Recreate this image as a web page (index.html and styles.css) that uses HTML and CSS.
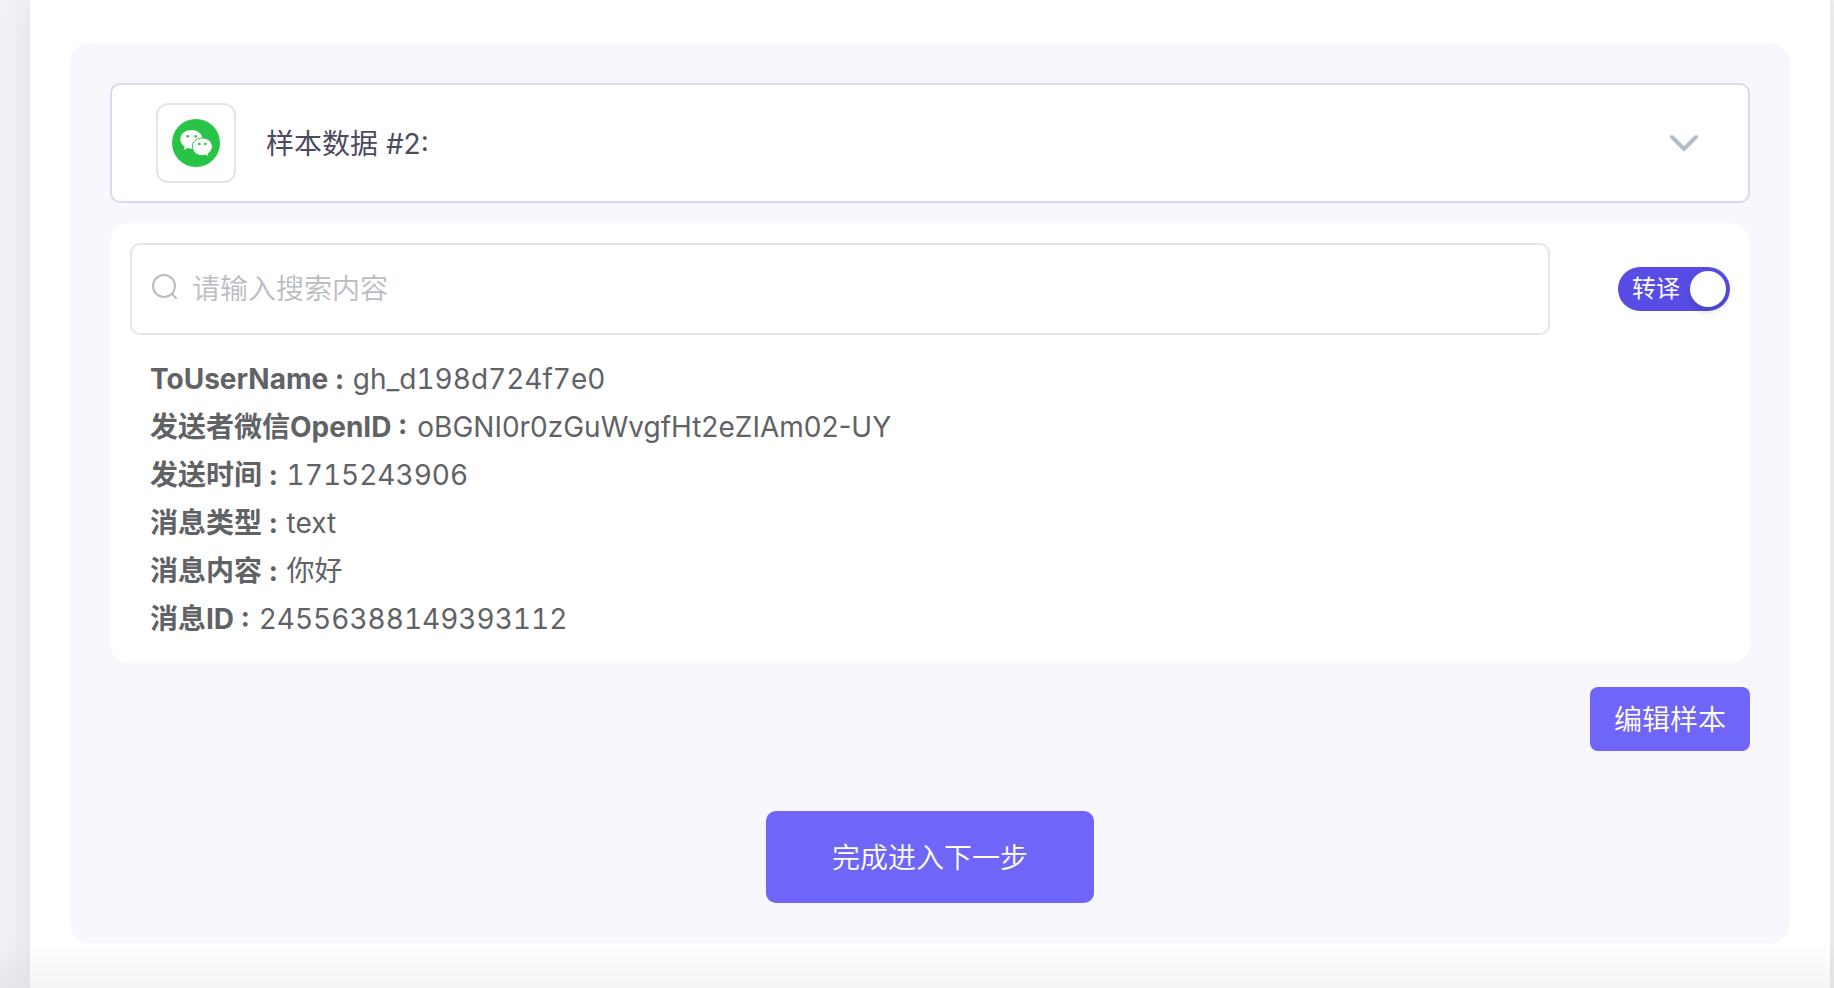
FILE: index.html
```
<!DOCTYPE html>
<html lang="zh-CN">

<head>
    <meta charset="utf-8">
    <meta name="viewport" content="width=device-width, initial-scale=1.0">
    <title>样本数据</title>
    <link rel="stylesheet" href="styles.css">
</head>

<body>
    <main class="page">
        <section class="panel">
            <button class="sample-head" type="button">
                <span class="app-icon">
                    <svg viewBox="0 0 144 144" width="48" height="48" aria-hidden="true">
                        <circle cx="72" cy="72" r="72" fill="#28c445" />
                        <path fill="#fff" d="M58 33c-19 0-33 12-33 28 0 9 5 17 13 22l-3 10 12-6c4 1 7 2 11 2 19 0 34-12 34-28S77 33 58 33z" />
                        <path fill="#fff" stroke="#28c445" stroke-width="3" d="M91 57c-17 0-30 11-30 26s13 27 30 27c4 0 7-1 10-2l9 6-2-10c8-5 13-12 13-21 0-15-13-26-30-26z" />
                        <g fill="#28c445">
                            <circle cx="47" cy="52" r="4" />
                            <circle cx="71" cy="52" r="4" />
                            <circle cx="82" cy="75" r="4" />
                            <circle cx="100" cy="75" r="4" />
                        </g>
                    </svg>
                </span>
                <span class="sample-title">样本数据 #2:</span>
                <svg class="arrow" viewBox="0 0 32 32" width="32" height="32" aria-hidden="true">
                    <path d="M4 10l12 12 12-12" />
                </svg>
            </button>

            <div class="card">
                <div class="toolbar">
                    <label class="search">
                        <svg viewBox="0 0 28 28" width="28" height="28" aria-hidden="true">
                            <circle cx="12" cy="11" r="11" />
                            <path d="M20 19l4 4" />
                        </svg>
                        <input type="text" placeholder="请输入搜索内容" aria-label="搜索">
                    </label>
                    <label class="switch">
                        <input type="checkbox" checked>
                        <span>转译</span>
                    </label>
                </div>
                <ul class="fields">
                    <li><b>ToUserName :</b> gh_d198d724f7e0</li>
                    <li class="open-id"><b>发送者微信OpenID :</b> oBGNI0r0zGuWvgfHt2eZIAm02-UY</li>
                    <li><b>发送时间 :</b> 1715243906</li>
                    <li><b>消息类型 :</b> text</li>
                    <li><b>消息内容 :</b> 你好</li>
                    <li><b>消息ID :</b> 24556388149393112</li>
                </ul>
            </div>

            <button class="btn btn-edit" type="button">编辑样本</button>
            <button class="btn btn-next" type="button">完成进入下一步</button>
        </section>
    </main>
</body>

</html>
```
FILE: styles.css
```
* {
    box-sizing: border-box;
}

body {
    margin: 0;
    background: #f1f2f6;
    font-family: Inter, "Noto Sans CJK SC", sans-serif;
    font-size: 28px;
    color: #606266;
}

button,
input {
    font: inherit;
}

.page {
    min-height: 100vh;
    margin: 0 4px 0 30px;
    padding: 43px 40px 45px;
    background: #fff;
    box-shadow: 0 0 32px rgba(0, 0, 0, 0.08);
}

/* soft shade above the bottom edge */
.page::after {
    content: "";
    position: fixed;
    left: 0;
    right: 0;
    bottom: 0;
    height: 48px;
    background: linear-gradient(rgba(0, 0, 0, 0), rgba(0, 0, 0, 0.04));
    pointer-events: none;
}

.panel {
    display: flex;
    flex-direction: column;
    padding: 40px;
    border-radius: 20px;
    background: #f7f7fd;
}

.sample-head {
    display: flex;
    align-items: center;
    height: 120px;
    padding: 0 48px 0 44px;
    border: 2px solid #dad8f0;
    border-radius: 10px;
    background: #fff;
    color: #4c4960;
    text-align: left;
}

.app-icon {
    display: flex;
    align-items: center;
    justify-content: center;
    width: 80px;
    height: 80px;
    margin-right: 30px;
    border: 2px solid #e6e6e8;
    border-radius: 12px;
}

.sample-title {
    flex: 1;
    padding-bottom: 2px;
}

.arrow {
    fill: none;
    stroke: #b4bcc8;
    stroke-width: 4;
    stroke-linecap: round;
}

.card {
    margin-top: 20px;
    padding: 20px;
    border-radius: 20px;
    background: #fff;
}

.toolbar {
    display: flex;
    align-items: center;
}

.search {
    flex: 1;
    display: flex;
    align-items: center;
    height: 92px;
    margin-right: 68px;
    padding: 0 20px;
    border: 2px solid #e4e5e7;
    border-radius: 10px;
}

.search svg {
    overflow: visible;
    fill: none;
    stroke: #b9bcc3;
    stroke-width: 2;
    stroke-linecap: round;
}

.search input {
    flex: 1;
    min-width: 0;
    padding: 0;
    margin-left: 12px;
    border: 0;
    outline: none;
    background: none;
    color: #606266;
    font-weight: 350;
}

.search input::placeholder {
    color: #b9bcc3;
    opacity: 1;
}

.switch {
    display: flex;
    align-items: center;
    justify-content: space-between;
    flex-direction: row-reverse;
    width: 112px;
    height: 44px;
    padding: 0 4px 0 14px;
    border-radius: 22px;
    background: #574de6;
    color: #fff;
    font-size: 24px;
    line-height: 44px;
}

.switch input {
    appearance: none;
    width: 36px;
    height: 36px;
    margin: 0;
    border-radius: 50%;
    background: #fff;
    box-shadow: 0 4px 8px rgba(0, 0, 0, 0.16);
}

.fields {
    margin: 20px 0 0;
    padding: 0 20px;
    list-style: none;
    line-height: 48px;
    font-variant-numeric: tabular-nums;
}

.fields b {
    margin-right: 2px;
    font-weight: 700;
}

.fields .open-id {
    font-variant-numeric: normal;
}

.btn {
    padding: 0 0 2px;
    border: 0;
    background: #6f66f9;
    color: #fff;
    font-weight: 350;
}

.btn-edit {
    align-self: flex-end;
    width: 160px;
    height: 64px;
    margin-top: 24px;
    border-radius: 8px;
}

.btn-next {
    align-self: center;
    width: 328px;
    height: 92px;
    margin-top: 60px;
    border-radius: 10px;
}
```
